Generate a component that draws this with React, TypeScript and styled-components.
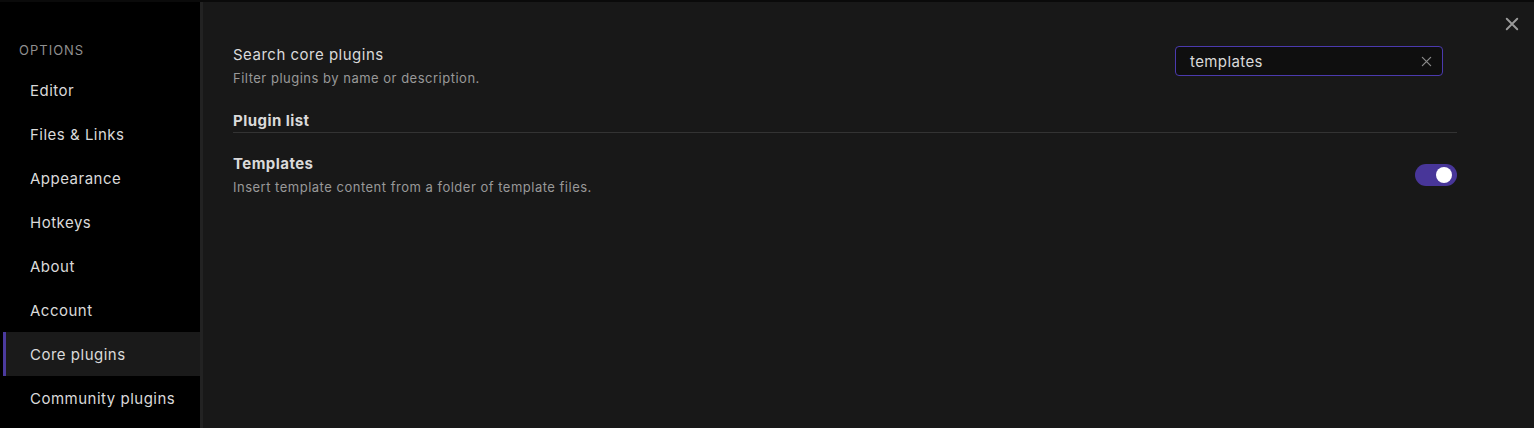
import React from "react";
import styled, { createGlobalStyle } from "styled-components";

const Global = createGlobalStyle`
  html, body { margin: 0; padding: 0; background: #000; }
  body { font-family: Inter, "Noto Sans", sans-serif; -webkit-font-smoothing: antialiased; }
  * { box-sizing: border-box; }
`;

const Frame = styled.div`
  width: 1534px;
  height: 428px;
  border-top: 2px solid #0a0a0a;
  display: flex;
  position: relative;
  overflow: hidden;
  background: #181818;
`;

const Sidebar = styled.nav`
  width: 200px;
  flex: none;
  background: #000;
  padding-top: 41px;
  display: flex;
  flex-direction: column;
`;

const SideHeader = styled.div`
  font-size: 13px;
  line-height: 14px;
  letter-spacing: 1px;
  color: #8f8f8f;
  text-transform: uppercase;
  padding-left: 19px;
  margin-bottom: 11px;
`;

const NavItem = styled.div<{ $active?: boolean }>`
  height: 44px;
  display: flex;
  align-items: center;
  padding-left: 30px;
  font-size: 15px;
  letter-spacing: 0.5px;
  color: #dadada;
  background: ${(p) => (p.$active ? "#1a1a1a" : "transparent")};
  box-shadow: ${(p) => (p.$active ? "inset 3px 0 0 #000, inset 6px 0 0 #4b3a9e" : "none")};
`;

const Divider = styled.div`
  width: 3px;
  flex: none;
  background: #222;
`;

const Content = styled.main`
  flex: 1;
  padding: 42px 77px 0 30px;
  background: #181818;
`;

const Setting = styled.div<{ $heading?: boolean }>`
  display: flex;
  align-items: center;
  justify-content: space-between;
  ${(p) => (p.$heading ? "border-bottom: 1px solid #333; margin-top: 23px;" : "")}
`;

const Info = styled.div`
  display: flex;
  flex-direction: column;
`;

const Name = styled.div<{ $bold?: boolean }>`
  font-size: 15px;
  line-height: 22px;
  letter-spacing: ${(p) => (p.$bold ? "0.45px" : "0.5px")};
  color: #dadada;
  font-weight: ${(p) => (p.$bold ? 700 : 400)};
`;

const Desc = styled.div`
  font-size: 13px;
  line-height: 18px;
  letter-spacing: 0.5px;
  margin-top: 3px;
  color: #999;
`;

const SearchBox = styled.div`
  width: 268px;
  height: 30px;
  margin-right: 14px;
  margin-top: -9px;
  border: 1px solid #4b3aae;
  border-radius: 4px;
  background: #0f0f0f;
  display: flex;
  align-items: center;
  padding: 0 10px 0 14px;
  justify-content: space-between;
`;

const SearchText = styled.span`
  font-size: 15px;
  letter-spacing: 0.4px;
  color: #dadada;
`;

const PluginRow = styled(Setting)`
  margin-top: 20px;
`;

const Toggle = styled.div<{ $on?: boolean }>`
  width: 42px;
  height: 22px;
  border-radius: 11px;
  background: ${(p) => (p.$on ? "#483699" : "#3a3a3a")};
  position: relative;
  margin-top: 1px;
  &::after {
    content: "";
    position: absolute;
    width: 16px;
    height: 16px;
    border-radius: 50%;
    background: #fff;
    top: 3px;
    left: ${(p) => (p.$on ? "21px" : "3px")};
  }
`;

const CloseBtn = styled.div`
  position: absolute;
  right: 14px;
  top: 14px;
  width: 16px;
  height: 16px;
  display: flex;
  align-items: center;
  justify-content: center;
`;

const X = ({ size, color, w }: { size: number; color: string; w: number }) => (
  <svg width={size} height={size} viewBox="0 0 16 16" fill="none">
    <path d="M2 2 L14 14 M14 2 L2 14" stroke={color} strokeWidth={w} strokeLinecap="round" />
  </svg>
);

const items = ["Editor", "Files & Links", "Appearance", "Hotkeys", "About", "Account", "Core plugins", "Community plugins"];

export default function App() {
  return (
    <>
      <Global />
      <Frame>
        <Sidebar>
          <SideHeader>Options</SideHeader>
          {items.map((it) => (
            <NavItem key={it} $active={it === "Core plugins"}>
              {it}
            </NavItem>
          ))}
        </Sidebar>
        <Divider />
        <Content>
          <Setting>
            <Info>
              <Name>Search core plugins</Name>
              <Desc>Filter plugins by name or description.</Desc>
            </Info>
            <SearchBox>
              <SearchText>templates</SearchText>
              <X size={11} color="#8a8a8a" w={1.8} />
            </SearchBox>
          </Setting>
          <Setting $heading>
            <Name $bold>Plugin list</Name>
          </Setting>
          <PluginRow>
            <Info>
              <Name $bold>Templates</Name>
              <Desc>Insert template content from a folder of template files.</Desc>
            </Info>
            <Toggle $on />
          </PluginRow>
        </Content>
        <CloseBtn>
          <X size={14} color="#9a9a9a" w={2.2} />
        </CloseBtn>
      </Frame>
    </>
  );
}
